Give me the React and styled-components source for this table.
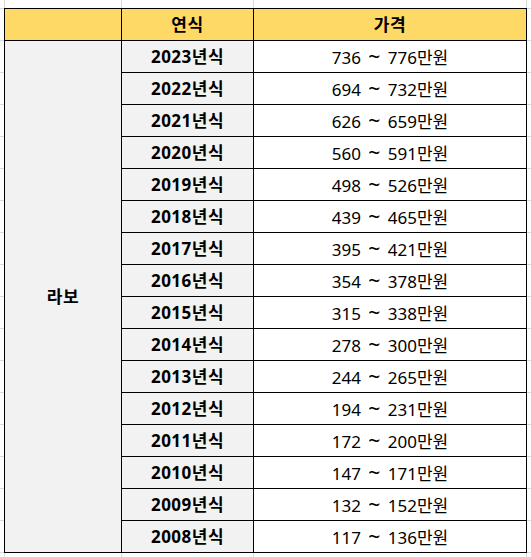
import React from "react";
import styled, { createGlobalStyle } from "styled-components";

const Global = createGlobalStyle`
  html, body { margin: 0; padding: 0; background: #fff; }
  body { font-family: "Noto Sans", "Noto Sans CJK KR", sans-serif; }
`;

const gridLine = "#dadada";

const Page = styled.div`
  width: 531px;
  height: 557px;
  box-sizing: border-box;
  padding: 8px 0 0 4px;
  overflow: hidden;
  background-color: #fff;
  background-image:
    linear-gradient(to bottom, ${gridLine} 1px, transparent 1px),
    linear-gradient(to right, ${gridLine} 1px, transparent 1px),
    linear-gradient(to right, ${gridLine} 1px, transparent 1px),
    linear-gradient(to right, ${gridLine} 1px, transparent 1px),
    linear-gradient(to right, ${gridLine} 1px, transparent 1px);
  background-size: 100% 32px, 1px 100%, 1px 100%, 1px 100%, 1px 100%;
  background-position: 0 8px, 4px 0, 121px 0, 253px 0, 526px 0;
  background-repeat: repeat-y, no-repeat, no-repeat, no-repeat, no-repeat;
`;

const Sheet = styled.div`
  display: grid;
  grid-template-columns: 117px 132px 273px;
  grid-auto-rows: 32px;
  width: 523px;
  box-sizing: border-box;
  border-top: 1px solid #000;
  border-left: 1px solid #000;
`;

const Cell = styled.div`
  box-sizing: border-box;
  border-right: 1px solid #000;
  border-bottom: 1px solid #000;
  display: flex;
  align-items: center;
  justify-content: center;
  font-size: 17px;
  line-height: 1;
  color: #000;
  white-space: pre;
  background: ${(p) => (p.$tone === "head" ? "#ffd966" : p.$tone === "gray" ? "#f2f2f2" : "#fff")};
  font-weight: ${(p) => (p.$bold ? 700 : 400)};
  letter-spacing: ${(p) => (p.$bold ? "0.5px" : "0")};
`;

const Price = styled.span`
  word-spacing: 3px;
  white-space: pre;
`;

const Tilde = styled.span`
  font-size: 21px;
  line-height: 1;
`;

const MergedCell = styled(Cell)`
  grid-row: 2 / span ${(p) => p.$span};
`;

const rows = [
  ["2023", "736", "776"],
  ["2022", "694", "732"],
  ["2021", "626", "659"],
  ["2020", "560", "591"],
  ["2019", "498", "526"],
  ["2018", "439", "465"],
  ["2017", "395", "421"],
  ["2016", "354", "378"],
  ["2015", "315", "338"],
  ["2014", "278", "300"],
  ["2013", "244", "265"],
  ["2012", "194", "231"],
  ["2011", "172", "200"],
  ["2010", "147", "171"],
  ["2009", "132", "152"],
  ["2008", "117", "136"],
];

export default function App() {
  return (
    <>
      <Global />
      <Page>
        <Sheet>
          <Cell $tone="head" />
          <Cell $tone="head" $bold>연식</Cell>
          <Cell $tone="head" $bold>가격</Cell>
          <MergedCell $tone="gray" $bold $span={rows.length}>라보</MergedCell>
          {rows.map(([y, lo, hi]) => (
            <React.Fragment key={y}>
              <Cell $tone="gray" $bold>{y}년식</Cell>
              <Cell>
                <Price>
                  {`${lo} `}
                  <Tilde>~</Tilde>
                  {` ${hi}만원`}
                </Price>
              </Cell>
            </React.Fragment>
          ))}
        </Sheet>
      </Page>
    </>
  );
}
